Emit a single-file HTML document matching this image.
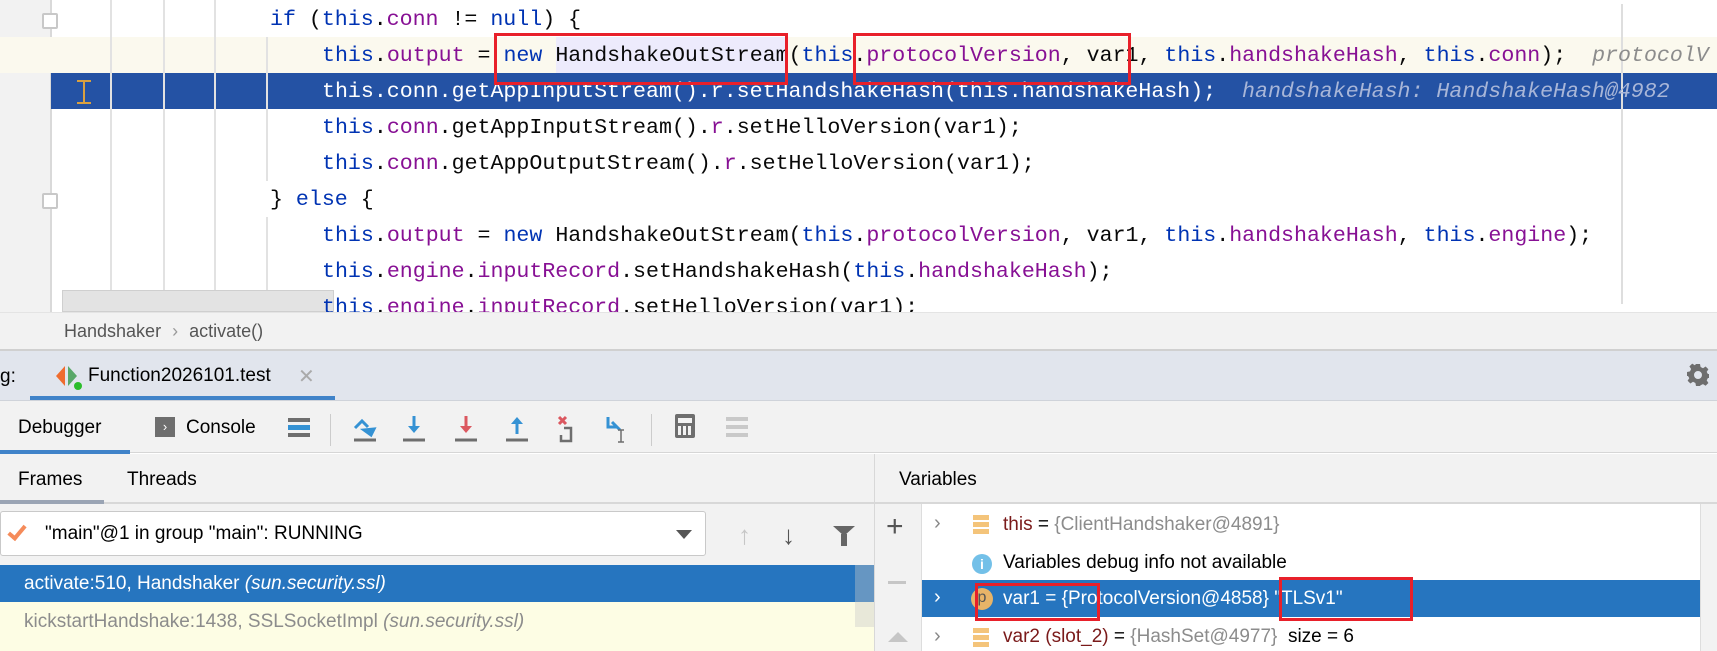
<!DOCTYPE html>
<html><head><meta charset="utf-8"><style>
*{margin:0;padding:0;box-sizing:border-box}
body{width:1717px;height:651px;overflow:hidden;background:#fff;position:relative;font-family:"Liberation Sans",sans-serif}
.a{position:absolute}
.code{font-family:"Liberation Mono",monospace;font-size:21.6px;white-space:pre;line-height:36px;color:#080808}
.k{color:#0033b3}.f{color:#871094}
.ui{font-size:19px;color:#000;white-space:nowrap}
.red{border:3px solid #e8202a}
</style></head><body>
<!-- editor -->
<div class="a" style="left:0;top:0;width:50px;height:312px;background:#f2f2f2"></div>
<div class="a" style="left:50px;top:0;width:2px;height:312px;background:#d9d9d9"></div>
<div class="a" style="left:0;top:37px;width:1717px;height:36px;background:#fbf9ee"></div>
<div class="a" style="left:51px;top:73px;width:1666px;height:36px;background:#2452a4"></div>
<div class="a" style="left:556px;top:37px;width:230px;height:36px;background:#edebfc"></div>
<div class="a" style="left:110px;top:0;width:2px;height:312px;background:#e2e2e2"></div>
<div class="a" style="left:163px;top:0;width:2px;height:312px;background:#e2e2e2"></div>
<div class="a" style="left:214px;top:0;width:2px;height:312px;background:#e2e2e2"></div>
<div class="a" style="left:266px;top:37px;width:2px;height:144px;background:#e2e2e2"></div>
<div class="a" style="left:266px;top:217px;width:2px;height:95px;background:#e2e2e2"></div>
<div class="a" style="left:1621px;top:4px;width:2px;height:300px;background:#dedede"></div>
<div class="a" style="left:42px;top:13px;width:16px;height:16px;border:2px solid #c8c8c8;background:#fff;border-radius:2px"></div>
<div class="a" style="left:42px;top:193px;width:16px;height:16px;border:2px solid #c8c8c8;background:#fff;border-radius:2px"></div>
<div class="a" style="left:77px;top:80px;width:14px;height:24px;border-top:2px solid #d8a040;border-bottom:2px solid #d8a040"></div>
<div class="a" style="left:83px;top:80px;width:2px;height:24px;background:#d8a040"></div>
<div class="a" style="left:62px;top:290px;width:272px;height:22px;background:#e3e3e3;border:1px solid #cfcfcf"></div>
<div class="a code" style="left:270px;top:2px"><span class="k">if</span> (<span class="k">this</span>.<span class="f">conn</span> != <span class="k">null</span>) {</div>
<div class="a code" style="left:322px;top:38px"><span class="k">this</span>.<span class="f">output</span> = <span class="k">new</span> HandshakeOutStream(<span class="k">this</span>.<span class="f">protocolVersion</span>, var1, <span class="k">this</span>.<span class="f">handshakeHash</span>, <span class="k">this</span>.<span class="f">conn</span>);  <i style="color:#8c8c8c">protocolV</i></div>
<div class="a code" style="left:322px;top:74px;color:#fff">this.conn.getAppInputStream().r.setHandshakeHash(this.handshakeHash);  <i style="color:#a8b6d8">handshakeHash: HandshakeHash@4982</i></div>
<div class="a code" style="left:322px;top:110px"><span class="k">this</span>.<span class="f">conn</span>.getAppInputStream().<span class="f">r</span>.setHelloVersion(var1);</div>
<div class="a code" style="left:322px;top:146px"><span class="k">this</span>.<span class="f">conn</span>.getAppOutputStream().<span class="f">r</span>.setHelloVersion(var1);</div>
<div class="a code" style="left:270px;top:182px">} <span class="k">else</span> {</div>
<div class="a code" style="left:322px;top:218px"><span class="k">this</span>.<span class="f">output</span> = <span class="k">new</span> HandshakeOutStream(<span class="k">this</span>.<span class="f">protocolVersion</span>, var1, <span class="k">this</span>.<span class="f">handshakeHash</span>, <span class="k">this</span>.<span class="f">engine</span>);</div>
<div class="a code" style="left:322px;top:254px"><span class="k">this</span>.<span class="f">engine</span>.<span class="f">inputRecord</span>.setHandshakeHash(<span class="k">this</span>.<span class="f">handshakeHash</span>);</div>
<div class="a code" style="left:322px;top:290px;height:22px;overflow:hidden"><span class="k">this</span>.<span class="f">engine</span>.<span class="f">inputRecord</span>.setHelloVersion(var1);</div>
<div class="a red" style="left:494px;top:33px;width:294px;height:52px"></div>
<div class="a red" style="left:853px;top:33px;width:278px;height:52px"></div>
<!-- breadcrumb -->
<div class="a" style="left:0;top:312px;width:1717px;height:38px;background:#f2f2f2;border-top:1px solid #e4e4e4"></div>
<div class="a ui" style="left:64px;top:321px;color:#555;font-size:18px">Handshaker <span style="color:#999;margin:0 6px">›</span> activate()</div>
<!-- tab bar -->
<div class="a" style="left:0;top:349px;width:1717px;height:52px;background:#e1e5ed;border-top:2px solid #d0d0d0;border-bottom:1px solid #cfd3da"></div>
<div class="a ui" style="left:0;top:366px">g:</div>
<div class="a" style="left:56px;top:366px;width:0;height:0;border-top:10px solid transparent;border-bottom:10px solid transparent;border-right:9px solid #ef6c2e"></div>
<div class="a" style="left:68px;top:366px;width:0;height:0;border-top:10px solid transparent;border-bottom:10px solid transparent;border-left:9px solid #59a869"></div>
<div class="a" style="left:74px;top:382px;width:8px;height:8px;border-radius:50%;background:#2bbd2b"></div>
<div class="a ui" style="left:88px;top:365px">Function2026101.test</div>
<div class="a ui" style="left:298px;top:364px;color:#aaa;font-size:20px">✕</div>
<div class="a" style="left:30px;top:396px;width:305px;height:4px;background:#4083c9"></div>
<svg class="a" style="left:1686px;top:363px" width="24" height="24" viewBox="0 0 24 24"><path fill="#6e6e6e" d="M10 1h4l.6 3 2.4 1.2 2.6-1.7 2.8 2.8-1.7 2.6L21.9 11H23v4h-1.1l-1.2 2.4 1.7 2.6-2.8 2.8-2.6-1.7-2.4 1.1L14 23h-4l-.6-3-2.4-1.2-2.6 1.7-2.8-2.8 1.7-2.6L2 13H1v-4l3-.6L5.1 6 3.4 3.4l2.8-2.8 2.6 1.7L10 1zM12 8a4 4 0 100 8 4 4 0 000-8z"/></svg>
<!-- toolbar -->
<div class="a" style="left:0;top:401px;width:1717px;height:52px;background:#f2f2f2;border-bottom:1px solid #d6d6d6"></div>
<div class="a ui" style="left:18px;top:417px">Debugger</div>
<div class="a" style="left:0;top:450px;width:130px;height:4px;background:#4083c9"></div>
<div class="a" style="left:155px;top:417px;width:20px;height:20px;background:#6e6e6e;color:#fff;font-size:13px;text-align:center;line-height:20px">›</div>
<div class="a ui" style="left:186px;top:417px">Console</div>
<div class="a" style="left:288px;top:418px;width:22px;height:4px;background:#6e6e6e"></div>
<div class="a" style="left:288px;top:425px;width:22px;height:5px;background:#3592d4"></div>
<div class="a" style="left:288px;top:433px;width:22px;height:4px;background:#6e6e6e"></div>
<div class="a" style="left:330px;top:414px;width:1px;height:32px;background:#ccc"></div>
<div class="a" style="left:651px;top:414px;width:1px;height:32px;background:#ccc"></div>
<svg class="a" style="left:350px;top:414px" width="290" height="30">
<g fill="none" stroke-width="3">
<path d="M5 14l7-7 6 6" stroke="#3592d4"/><path d="M14 16l10-1-3 6z" fill="#3592d4" stroke="#3592d4"/>
<path d="M4 26h22" stroke="#6e6e6e"/>
<path d="M64 2v14" stroke="#3592d4"/><path d="M58 12l6 7 6-7z" fill="#3592d4" stroke="none"/><path d="M53 26h22" stroke="#6e6e6e"/>
<path d="M116 2v14" stroke="#db5860"/><path d="M110 12l6 7 6-7z" fill="#db5860" stroke="none"/><path d="M105 26h22" stroke="#6e6e6e"/>
<path d="M167 6v14" stroke="#3592d4"/><path d="M161 10l6-7 6 7z" fill="#3592d4" stroke="none"/><path d="M156 26h22" stroke="#6e6e6e"/>
<path d="M209 3l7 7M216 3l-7 7" stroke="#db5860"/><path d="M214 14h7v13h-10v-6" stroke="#6e6e6e" stroke-width="2.5"/>
<path d="M258 3v10h9" stroke="#3592d4"/><path d="M262 8l8 8" stroke="#3592d4"/>
<path d="M271 16v12M268 16h6M268 28h6" stroke="#6e6e6e" stroke-width="1.5"/>
</g></svg>
<div class="a" style="left:675px;top:414px;width:20px;height:24px;background:#6e6e6e;border-radius:2px"></div>
<div class="a" style="left:678px;top:418px;width:14px;height:5px;background:#f2f2f2"></div>
<div class="a" style="left:678px;top:426px;width:14px;height:9px;background:repeating-linear-gradient(90deg,#f2f2f2 0 3px,#6e6e6e 3px 5px),#f2f2f2"></div>
<div class="a" style="left:726px;top:417px;width:22px;height:20px;background:repeating-linear-gradient(180deg,#c9c9c9 0 4px,transparent 4px 8px)"></div>
<!-- frames/vars header -->
<div class="a" style="left:0;top:454px;width:1717px;height:50px;background:#f2f2f2;border-bottom:2px solid #d8d8d8"></div>
<div class="a ui" style="left:18px;top:469px">Frames</div>
<div class="a ui" style="left:127px;top:469px">Threads</div>
<div class="a" style="left:0;top:500px;width:104px;height:4px;background:#9aa4b4"></div>
<div class="a" style="left:874px;top:454px;width:1px;height:197px;background:#d8d8d8"></div>
<div class="a ui" style="left:899px;top:469px">Variables</div>
<!-- frames panel -->
<div class="a" style="left:0;top:504px;width:874px;height:61px;background:#f2f2f2"></div>
<div class="a" style="left:0;top:511px;width:706px;height:45px;background:#fff;border:1px solid #c9c9c9;border-radius:3px"></div>
<div class="a" style="left:12px;top:522px;width:10px;height:18px;border-right:4px solid #f58b5a;border-bottom:4px solid #f58b5a;transform:rotate(40deg)"></div>
<div class="a ui" style="left:45px;top:523px">"main"@1 in group "main": RUNNING</div>
<div class="a" style="left:676px;top:530px;border-left:8px solid transparent;border-right:8px solid transparent;border-top:9px solid #555"></div>
<div class="a" style="left:738px;top:520px;font-size:26px;color:#c6c6c6">↑</div>
<div class="a" style="left:782px;top:520px;font-size:26px;color:#555">↓</div>
<div class="a" style="left:833px;top:526px;border-left:11px solid transparent;border-right:11px solid transparent;border-top:10px solid #666"></div>
<div class="a" style="left:841px;top:534px;width:6px;height:12px;background:#666"></div>
<div class="a" style="left:0;top:565px;width:874px;height:37px;background:#2675bf"></div>
<div class="a ui" style="left:24px;top:573px;color:#fff">activate:510, Handshaker <i>(sun.security.ssl)</i></div>
<div class="a" style="left:0;top:602px;width:874px;height:49px;background:#fdfde4"></div>
<div class="a ui" style="left:24px;top:611px;color:#8c8c8c">kickstartHandshake:1438, SSLSocketImpl <i>(sun.security.ssl)</i></div>
<div class="a" style="left:855px;top:565px;width:19px;height:62px;background:rgba(200,200,200,.4)"></div>
<!-- variables -->
<div class="a" style="left:875px;top:504px;width:47px;height:147px;background:#f2f2f2;border-right:1px solid #ddd"></div>
<div class="a" style="left:886px;top:510px;font-size:30px;color:#555">+</div>
<div class="a" style="left:888px;top:581px;width:18px;height:3px;background:#c6c6c6"></div>
<div class="a" style="left:888px;top:632px;border-left:10px solid transparent;border-right:10px solid transparent;border-bottom:10px solid #c6c6c6"></div>
<div class="a" style="left:922px;top:580px;width:778px;height:37px;background:#2675bf"></div>
<div class="a" style="left:1700px;top:504px;width:17px;height:147px;background:#f2f2f2;border-left:1px solid #ddd"></div>
<div class="a ui" style="left:934px;top:512px;color:#888;font-size:20px">›</div>
<div class="a ui" style="left:934px;top:586px;color:#fff;font-size:20px">›</div>
<div class="a ui" style="left:934px;top:625px;color:#888;font-size:20px">›</div>
<div class="a" style="left:973px;top:515px;width:16px;height:20px;background:repeating-linear-gradient(180deg,#f4c47a 0 5px,#fff 5px 7px)"></div>
<div class="a" style="left:973px;top:628px;width:16px;height:20px;background:repeating-linear-gradient(180deg,#f4c47a 0 5px,#fff 5px 7px)"></div>
<div class="a" style="left:972px;top:554px;width:20px;height:20px;border-radius:50%;background:#73c0e8;color:#fff;font-size:14px;font-weight:bold;text-align:center;line-height:20px">i</div>
<div class="a" style="left:971px;top:588px;width:22px;height:22px;border-radius:50%;background:#e8b468;color:#555;font-size:16px;text-align:center;line-height:20px">p</div>
<div class="a ui" style="left:1003px;top:514px"><span style="color:#7a1a1a">this</span> = <span style="color:#8c8c8c">{ClientHandshaker@4891}</span></div>
<div class="a ui" style="left:1003px;top:552px">Variables debug info not available</div>
<div class="a ui" style="left:1003px;top:588px;color:#fff">var1 = {ProtocolVersion@4858} "TLSv1"</div>
<div class="a ui" style="left:1003px;top:626px"><span style="color:#7a1a1a">var2 (slot_2)</span> = <span style="color:#8c8c8c">{HashSet@4977}</span>&nbsp; size = 6</div>
<div class="a red" style="left:975px;top:583px;width:125px;height:38px"></div>
<div class="a red" style="left:1279px;top:577px;width:134px;height:44px"></div>
</body></html>
